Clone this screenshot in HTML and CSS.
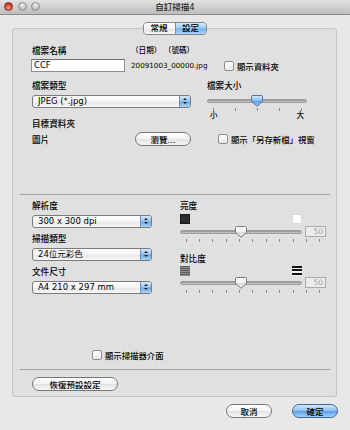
FILE: index.html
```html
<!DOCTYPE html>
<html lang="zh-Hant">
<head>
<meta charset="UTF-8" />
<title>自訂掃描4</title>
<link rel="stylesheet" href="styles.css">
</head>
<body>
  <div class="window">
    <div class="titlebar">
      <div class="lights">
        <span class="light red"></span>
        <span class="light"></span>
        <span class="light"></span>
      </div>
      <div class="title">自訂掃描4</div>
    </div>

    <div class="content">
      <div class="group">
        <div class="tabs">
          <span class="tab">常規</span>
          <span class="tab on">設定</span>
        </div>

        <!-- file settings -->
        <div class="top">
          <div class="row row-name">
            <div class="col-name">
              <div class="label">檔案名稱</div>
              <div class="field">CCF</div>
            </div>
            <div class="col-sample">
              <div class="hint">（日期） （號碼）</div>
              <div class="sample">20091003_00000.jpg</div>
            </div>
            <div class="check check-folder"><span class="box"></span>顯示資料夾</div>
          </div>

          <div class="row row-type">
            <div class="col-type">
              <div class="label">檔案類型</div>
              <div class="popup">JPEG (*.jpg)<span class="arrows"></span></div>
            </div>
            <div class="col-size">
              <div class="label">檔案大小</div>
              <div class="slider">
                <div class="track"></div>
                <svg class="thumb" width="12" height="12" viewBox="0 0 12 12">
                  <defs>
                    <linearGradient id="gBlue" x1="0" y1="0" x2="0" y2="1">
                      <stop offset="0" stop-color="#d6eafd"/>
                      <stop offset="0.5" stop-color="#86bdf1"/>
                      <stop offset="0.55" stop-color="#5f9fe5"/>
                      <stop offset="1" stop-color="#a6d2f8"/>
                    </linearGradient>
                  </defs>
                  <path d="M1.5 0.5 H10.5 Q11.5 0.5 11.5 1.5 V6.5 L6 11.2 L0.5 6.5 V1.5 Q0.5 0.5 1.5 0.5 Z" fill="url(#gBlue)" stroke="#4a74a8"/>
                </svg>
              </div>
              <div class="ticks">
                <i></i><i></i><i></i><i></i><i></i>
              </div>
              <div class="ends"><span>小</span><span>大</span></div>
            </div>
          </div>

          <div class="label">目標資料夾</div>
          <div class="row row-dest">
            <span class="dest">圖片</span>
            <span class="button browse">瀏覽...</span>
            <div class="check"><span class="box"></span>顯示「另存新檔」視窗</div>
          </div>
        </div>

        <div class="sep"></div>

        <!-- scan settings -->
        <div class="bottom">
          <div class="cols">
            <div class="col-left">
              <div class="label">解析度</div>
              <div class="popup">300 x 300 dpi<span class="arrows"></span></div>
              <div class="label">掃描類型</div>
              <div class="popup">24位元彩色<span class="arrows"></span></div>
              <div class="label">文件尺寸</div>
              <div class="popup">A4 210 x 297 mm<span class="arrows"></span></div>
            </div>
            <div class="col-right">
              <div class="label">亮度</div>
              <div class="icons">
                <span class="sq dark"></span>
                <span class="sq light-sq"></span>
              </div>
              <div class="slider-row">
                <div class="slider">
                  <div class="track"></div>
                  <svg class="thumb" width="12" height="12" viewBox="0 0 12 12">
                    <defs>
                      <linearGradient id="gGray" x1="0" y1="0" x2="0" y2="1">
                        <stop offset="0" stop-color="#ffffff"/>
                        <stop offset="0.5" stop-color="#f0f0f0"/>
                        <stop offset="0.55" stop-color="#dcdcdc"/>
                        <stop offset="1" stop-color="#f5f5f5"/>
                      </linearGradient>
                    </defs>
                    <path d="M1.5 0.5 H10.5 Q11.5 0.5 11.5 1.5 V6.5 L6 11.2 L0.5 6.5 V1.5 Q0.5 0.5 1.5 0.5 Z" fill="url(#gGray)" stroke="#7a7a7a"/>
                  </svg>
                </div>
                <span class="value">50</span>
              </div>
              <div class="ticks">
                <i></i><i></i><i></i><i></i><i></i><i></i><i></i><i></i><i></i><i></i><i></i>
              </div>

              <div class="label label-contrast">對比度</div>
              <div class="icons icons-contrast">
                <span class="stripes soft"></span>
                <span class="stripes hard"></span>
              </div>
              <div class="slider-row">
                <div class="slider">
                  <div class="track"></div>
                  <svg class="thumb" width="12" height="12" viewBox="0 0 12 12">
                    <path d="M1.5 0.5 H10.5 Q11.5 0.5 11.5 1.5 V6.5 L6 11.2 L0.5 6.5 V1.5 Q0.5 0.5 1.5 0.5 Z" fill="url(#gGray)" stroke="#7a7a7a"/>
                  </svg>
                </div>
                <span class="value">50</span>
              </div>
              <div class="ticks">
                <i></i><i></i><i></i><i></i><i></i><i></i><i></i><i></i><i></i><i></i><i></i>
              </div>
            </div>
          </div>

          <div class="check check-scanner"><span class="box"></span>顯示掃描器介面</div>
        </div>

        <div class="sep"></div>

        <div class="group-foot">
          <span class="button reset">恢復預設設定</span>
        </div>
      </div>

      <div class="actions">
        <span class="button">取消</span>
        <span class="button default">確定</span>
      </div>
    </div>
  </div>
</body>
</html>
```

FILE: styles.css
```css
/* Reset */
* {
  box-sizing: border-box;
}
body {
  margin: 0;
  background: #e8e8e8;
  font-family: "DejaVu Sans", "Noto Sans CJK TC", sans-serif;
  font-size: 8.5px;
  font-weight: 500;
  color: #000;
}
.window {
  width: 350px;
  height: 430px;
  background: #e8e8e8;
  overflow: hidden;
}

/* Title bar */
.titlebar {
  position: relative;
  height: 15px;
  background: linear-gradient(#e2e2e2, #bdbdbd);
  border-bottom: 1px solid #8c8c8c;
  display: flex;
  align-items: center;
  justify-content: center;
}
.lights {
  position: absolute;
  left: 4px;
  top: 2px;
  display: flex;
  gap: 4.5px;
}
.light {
  width: 9px;
  height: 9px;
  border-radius: 50%;
  background: radial-gradient(circle at 50% 30%, #f2f2f2, #c2c2c2 60%, #9f9f9f);
  border: 1px solid #8e8e8e;
}
.light.red {
  background: radial-gradient(circle at 50% 70%, #f7a89a, #d8402e 55%, #a01f12);
  border-color: #8a2a20;
}
.title {
  font-size: 8.5px;
  line-height: 12px;
  color: #222;
}

.content {
  padding-top: 13px;
}

/* Group box */
.group {
  position: relative;
  margin-left: 12px;
  width: 325px;
  background: #e0e0e0;
  border: 1px solid #c4c4c4;
  border-radius: 3px;
}
.tabs {
  position: absolute;
  top: -7px;
  left: 50%;
  transform: translateX(-50%);
  display: flex;
  border: 1px solid #868686;
  border-radius: 4px;
  overflow: hidden;
}
.tab {
  width: 31px;
  height: 11px;
  line-height: 11px;
  text-align: center;
  font-size: 8.5px;
  background: linear-gradient(#ffffff, #f3f3f3 50%, #e3e3e3 51%, #f8f8f8);
}
.tab + .tab {
  border-left: 1px solid #8c8c8c;
}
.tab.on {
  background: linear-gradient(#d5e9fc, #9ccaf3 48%, #73b1ec 52%, #a9d5f8);
}

.label {
  height: 12px;
  line-height: 12px;
  font-size: 8.6px;
  white-space: nowrap;
}

.top {
  height: 165px;
  padding: 16px 0 0 19px;
}
.row {
  display: flex;
  align-items: flex-start;
}
.col-name {
  width: 93px;
}
.field {
  margin: 2px 0 0 -1px;
  height: 13px;
  line-height: 11px;
  padding-left: 2px;
  background: #fff;
  border: 1px solid #8e8e8e;
  border-top-color: #6e6e6e;
  font-size: 8.5px;
  font-weight: 400;
}
.col-sample {
  width: 93px;
  margin-left: 6px;
}
.hint {
  height: 12px;
  line-height: 12px;
  font-size: 7.6px;
  white-space: nowrap;
}
.sample {
  margin-top: 3px;
  line-height: 12px;
  font-size: 7.2px;
  font-weight: 400;
}
.check {
  display: flex;
  align-items: center;
  gap: 3px;
  height: 10px;
  font-size: 8.4px;
  white-space: nowrap;
}
.check .box {
  width: 10px;
  height: 10px;
  border: 1px solid #8f8f8f;
  border-radius: 2px;
  background: linear-gradient(#fdfdfd, #e9e9e9);
}
.check-folder {
  margin-top: 16px;
}

.row-type {
  margin-top: 8px;
  height: 38px;
}
.col-type {
  width: 159px;
}
.popup {
  position: relative;
  margin-top: 3px;
  height: 13px;
  line-height: 11px;
  padding-left: 5px;
  border: 1px solid #7b7b7b;
  border-radius: 3px;
  background: linear-gradient(#ffffff, #f4f4f4 50%, #e6e6e6 51%, #f7f7f7);
  font-size: 8.5px;
  font-weight: 400;
  white-space: nowrap;
}
.arrows {
  position: absolute;
  right: 0;
  top: 0;
  width: 11px;
  height: 11px;
  border-left: 1px solid #6d8fb8;
  border-radius: 0 2px 2px 0;
  background: linear-gradient(#d3e8fc, #96c6f2 48%, #69a9ea 52%, #a7d4f8);
}
.arrows::before,
.arrows::after {
  content: "";
  position: absolute;
  left: 3px;
  border-left: 2px solid transparent;
  border-right: 2px solid transparent;
}
.arrows::before {
  top: 2px;
  border-bottom: 2.5px solid #222;
}
.arrows::after {
  top: 6px;
  border-top: 2.5px solid #222;
}
.col-size {
  margin-left: 16px;
  width: 100px;
}

/* Sliders */
.slider {
  position: relative;
  height: 10px;
  display: flex;
  align-items: center;
}
.col-size .slider {
  margin-top: 4px;
}
.track {
  flex: 1;
  height: 4px;
  border-radius: 2px;
  background: linear-gradient(#8e8e8e, #cfcfcf);
  border: 1px solid #9c9c9c;
}
.thumb {
  position: absolute;
  left: 50%;
  top: -1px;
  margin-left: -6px;
}
.ticks {
  display: flex;
  justify-content: space-between;
  padding: 0 5.5px;
  margin-top: 2px;
  height: 3px;
}
.ticks i {
  width: 1px;
  height: 3px;
  background: #8a8a8a;
}
.ends {
  display: flex;
  justify-content: space-between;
  padding: 0 3px;
  line-height: 10px;
  font-size: 7.5px;
}

.row-dest {
  margin-top: 1px;
  height: 15px;
  align-items: center;
}
.dest {
  width: 103px;
  font-size: 8.6px;
}
.button {
  display: inline-flex;
  align-items: center;
  justify-content: center;
  height: 14px;
  border: 1px solid #767676;
  border-radius: 7px;
  background: linear-gradient(#ffffff, #f3f3f3 50%, #e2e2e2 51%, #f8f8f8);
  font-size: 8.5px;
  white-space: nowrap;
}
.browse {
  width: 56px;
  margin-right: 27px;
}

.sep {
  height: 1px;
  margin: 0 6px 0 7px;
  background: #a4a4a4;
}

/* Scan settings */
.bottom {
  height: 174px;
  padding: 5px 0 9px 19px;
  display: flex;
  flex-direction: column;
}
.cols {
  display: flex;
}
.col-left {
  width: 120px;
}
.col-left .popup {
  margin-bottom: 5px;
}
.col-right {
  margin-left: 28px;
  width: 146px;
}
.icons {
  display: flex;
  justify-content: space-between;
  width: 122px;
  margin-top: 2px;
  height: 10px;
}
.sq {
  width: 10px;
  height: 10px;
}
.sq.dark {
  background: #2c2c2c;
  border: 1px solid #1a1a1a;
}
.sq.light-sq {
  background: #fff;
  border: 1px solid #d8d8d8;
}
.icons-contrast {
  margin-top: 1px;
}
.stripes {
  width: 10px;
  height: 10px;
}
.stripes.soft {
  background: repeating-linear-gradient(#5e5e5e 0 1px, #8c8c8c 1px 2px);
}
.stripes.hard {
  background: repeating-linear-gradient(#111 0 2px, #f4f4f4 2px 3.5px);
}
.slider-row {
  display: flex;
  align-items: center;
  margin-top: 2px;
  height: 11px;
}
.slider-row .slider {
  width: 122px;
}
.icons-contrast + .slider-row {
  margin-top: 1px;
}
.value {
  margin-left: 3px;
  width: 21px;
  height: 11px;
  line-height: 9px;
  padding-right: 2px;
  text-align: right;
  border: 1px solid #ababab;
  background: #ececec;
  color: #9b9b9b;
  font-size: 7.5px;
  font-weight: 400;
}
.label-contrast {
  margin-top: 11px;
}
.check-scanner {
  margin: auto 0 0 60px;
}

.group-foot {
  height: 26px;
  padding: 7px 0 0 19px;
}
.reset {
  width: 86px;
}

/* Dialog buttons */
.actions {
  display: flex;
  justify-content: flex-end;
  gap: 20px;
  margin-top: 7px;
  padding-right: 12px;
}
.actions .button {
  width: 46px;
}
.button.default {
  border-color: #40699c;
  background: linear-gradient(#d3e8fc, #8cc0f1 48%, #5d9fe6 52%, #a2d1f8);
}
```
